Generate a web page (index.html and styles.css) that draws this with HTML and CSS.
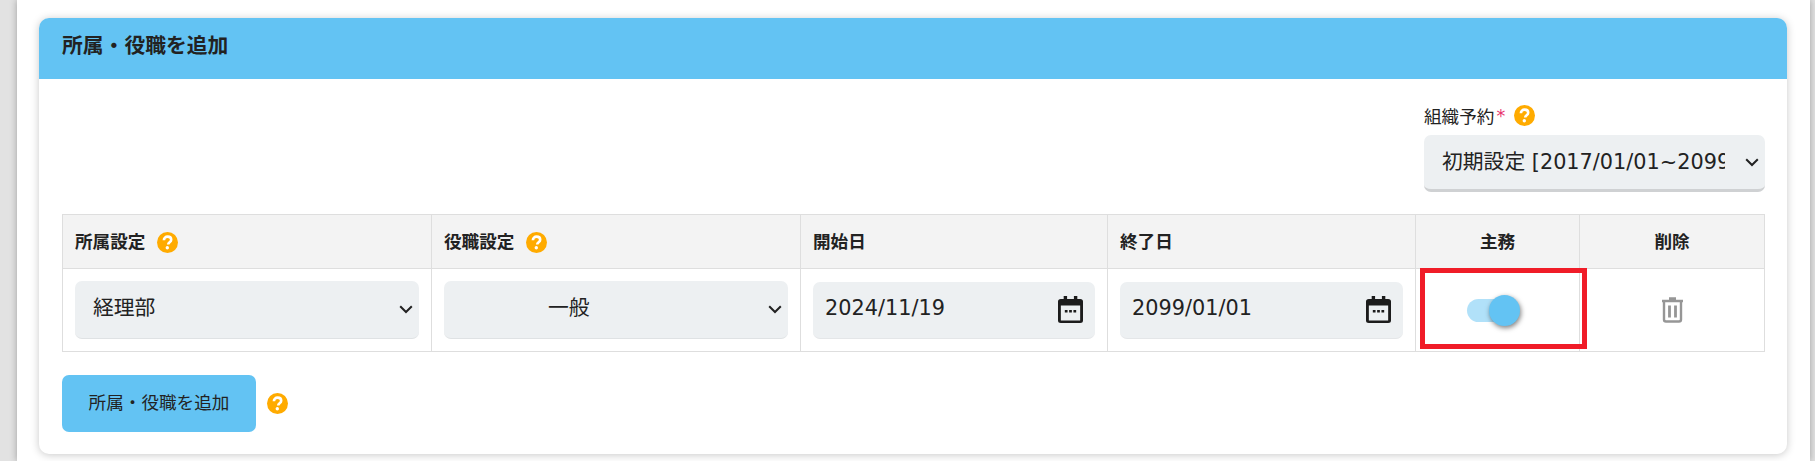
FILE: index.html
```html
<!DOCTYPE html>
<html lang="ja">

<head>
  <title>所属・役職を追加</title>
  <link rel="stylesheet" href="styles.css">
</head>

<body>
  <div class="page">
    <div class="prev-card"></div>

    <section class="card">
      <h2 class="card-head">所属・役職を追加</h2>

      <div class="card-body">
        <div class="org-row">
          <div class="org-field">
            <label class="org-label">組織予約<span class="req">*</span>
              <svg class="help" viewBox="0 0 21 21"><circle cx="10.5" cy="10.5" r="10.5" fill="#ffab00"/><path d="M6.9 8.2c0-2.2 1.6-3.6 3.7-3.6s3.6 1.3 3.6 3.1c0 2.6-3 2.5-3 4.8" fill="none" stroke="#fff" stroke-width="2.6"/><circle cx="10.3" cy="15.8" r="1.7" fill="#fff"/></svg>
            </label>
            <select class="select select-org">
              <option>初期設定 [2017/01/01~2099/01/01]</option>
            </select>
          </div>
        </div>

        <table class="roles">
          <colgroup>
            <col class="c-dept">
            <col class="c-post">
            <col class="c-date">
            <col class="c-date2">
            <col class="c-main">
            <col class="c-del">
          </colgroup>
          <thead>
            <tr>
              <th>所属設定
                <svg class="help help-th" viewBox="0 0 21 21"><circle cx="10.5" cy="10.5" r="10.5" fill="#ffab00"/><path d="M6.9 8.2c0-2.2 1.6-3.6 3.7-3.6s3.6 1.3 3.6 3.1c0 2.6-3 2.5-3 4.8" fill="none" stroke="#fff" stroke-width="2.6"/><circle cx="10.3" cy="15.8" r="1.7" fill="#fff"/></svg>
              </th>
              <th>役職設定
                <svg class="help help-th" viewBox="0 0 21 21"><circle cx="10.5" cy="10.5" r="10.5" fill="#ffab00"/><path d="M6.9 8.2c0-2.2 1.6-3.6 3.7-3.6s3.6 1.3 3.6 3.1c0 2.6-3 2.5-3 4.8" fill="none" stroke="#fff" stroke-width="2.6"/><circle cx="10.3" cy="15.8" r="1.7" fill="#fff"/></svg>
              </th>
              <th>開始日</th>
              <th>終了日</th>
              <th class="center">主務</th>
              <th class="center">削除</th>
            </tr>
          </thead>
          <tbody>
            <tr>
              <td>
                <select class="select">
                  <option>経理部</option>
                </select>
              </td>
              <td>
                <select class="select select-mid">
                  <option>一般</option>
                </select>
              </td>
              <td>
                <div class="date">
                  <span class="date-text">2024/11/19</span>
                  <svg class="cal" viewBox="1 0 22 27" preserveAspectRatio="none"><path d="M6 0h3v3h6V0h3v3h2.500A2.500 2.500 0 0 1 23 5.500v19a2.500 2.500 0 0 1-2.500 2.500h-17A2.500 2.500 0 0 1 1 24.500v-19A2.500 2.500 0 0 1 3.500 3H6zM3.500 9.500v15h17v-15z" fill="#1c1c1c" fill-rule="evenodd"/><path d="M7 14h2.400v2.400H7zM10.800 14h2.400v2.400h-2.400zM14.600 14H17v2.400h-2.400z" fill="#1c1c1c"/></svg>
                </div>
              </td>
              <td>
                <div class="date">
                  <span class="date-text">2099/01/01</span>
                  <svg class="cal" viewBox="1 0 22 27" preserveAspectRatio="none"><path d="M6 0h3v3h6V0h3v3h2.500A2.500 2.500 0 0 1 23 5.500v19a2.500 2.500 0 0 1-2.500 2.500h-17A2.500 2.500 0 0 1 1 24.500v-19A2.500 2.500 0 0 1 3.500 3H6zM3.500 9.500v15h17v-15z" fill="#1c1c1c" fill-rule="evenodd"/><path d="M7 14h2.400v2.400H7zM10.800 14h2.400v2.400h-2.400zM14.600 14H17v2.400h-2.400z" fill="#1c1c1c"/></svg>
                </div>
              </td>
              <td class="cell-toggle">
                <div class="toggle"><span class="knob"></span></div>
                <div class="marker"></div>
              </td>
              <td class="center">
                <svg class="trash" viewBox="0 0 23 26"><path d="M8 1.500h7M1 4h21" fill="none" stroke="#969696" stroke-width="2.400"/><path d="M3 4.500v18a2 2 0 0 0 2 2h13a2 2 0 0 0 2-2v-18" fill="none" stroke="#969696" stroke-width="2.400"/><path d="M8.500 8.500v12M14.500 8.500v12" fill="none" stroke="#969696" stroke-width="2.800"/></svg>
              </td>
            </tr>
          </tbody>
        </table>

        <div class="add-row">
          <button class="add-btn">所属・役職を追加</button>
          <svg class="help" viewBox="0 0 21 21"><circle cx="10.5" cy="10.5" r="10.5" fill="#ffab00"/><path d="M6.9 8.2c0-2.2 1.6-3.600 3.700-3.600s3.600 1.300 3.600 3.100c0 2.600-3 2.500-3 4.800" fill="none" stroke="#fff" stroke-width="2.600"/><circle cx="10.300" cy="15.800" r="1.700" fill="#fff"/></svg>
        </div>
      </div>
    </section>
  </div>
</body>

</html>
```

FILE: styles.css
```css
html,
body {
  margin: 0;
  height: 461px;
  overflow: hidden;
  background: #e2e2e2;
}

body {
  font-family: "DejaVu Sans", "Noto Sans CJK JP", sans-serif;
  color: #222;
}

.page {
  display: flex;
  flex-direction: column;
  box-sizing: border-box;
  height: 461px;
  margin: 0 5px 0 17px;
  padding: 0 23px 0 22px;
  background: #fff;
  box-shadow: 0 0 7px rgba(0, 0, 0, 0.3);
}

.prev-card {
  flex: none;
  height: 0;
  margin-bottom: 18px;
  box-shadow: 0 0 5px rgba(0, 0, 0, 0.25);
}

.card {
  flex: none;
  height: 436px;
  background: #fff;
  border-radius: 10px;
  box-shadow: 0 1px 8px rgba(0, 0, 0, 0.22);
}

.card-head {
  margin: 0;
  height: 61px;
  padding: 0 23px;
  line-height: 57px;
  font-size: 20.8px;
  font-weight: 700;
  background: #63c3f3;
  border-radius: 10px 10px 0 0;
}

.card-body {
  padding: 19px 22px 0 23px;
}

.org-row {
  display: flex;
  justify-content: flex-end;
  height: 116px;
}

.org-field {
  width: 341px;
}

.org-label {
  display: flex;
  align-items: center;
  height: 35px;
  margin-bottom: 2px;
  font-size: 17.6px;
}

.req {
  color: #e8336d;
  margin: 0 9px 0 2px;
}

.help {
  width: 21px;
  height: 21px;
  flex: none;
}

.help-th {
  vertical-align: -5px;
  margin-left: 5px;
}

.select {
  appearance: none;
  display: block;
  box-sizing: border-box;
  width: 100%;
  height: 58px;
  padding: 0 38px 4px 18px;
  border: none;
  border-bottom: 1px solid #dfe2e4;
  border-radius: 7px;
  background: #edf0f2 url("data:image/svg+xml,%3Csvg xmlns='http://www.w3.org/2000/svg' viewBox='0 0 14 9'%3E%3Cpath d='M1.200 1.200 7 7l5.800-5.800' fill='none' stroke='%23222' stroke-width='2'/%3E%3C/svg%3E") no-repeat right 6px center / 14px 9px;
  color: #222;
  font-family: inherit;
  font-size: 20.8px;
  outline: none;
}

.select-org {
  height: 57px;
  padding: 0 40px 0 18px;
  border-bottom: 3px solid #cfd1d3;
}

.select-mid {
  padding-left: 104px;
}

.roles {
  width: 1703px;
  table-layout: fixed;
  border-collapse: collapse;
}

.c-dept {
  width: 369px;
}

.c-post {
  width: 369px;
}

.c-date {
  width: 307px;
}

.c-date2 {
  width: 308px;
}

.c-main {
  width: 164px;
}

.roles th,
.roles td {
  border: 1px solid #dedede;
}

.roles th {
  height: 50px;
  padding: 0 12px 3px;
  background: #f3f3f3;
  font-size: 17.6px;
  font-weight: 700;
  text-align: left;
}

.roles th.center {
  text-align: center;
}

.roles td {
  height: 82px;
  padding: 0 12px;
}

.roles td.center {
  text-align: center;
}

.date {
  display: flex;
  align-items: center;
  justify-content: space-between;
  box-sizing: border-box;
  height: 57px;
  padding: 0 12px;
  background: #edf0f2;
  border-radius: 7px;
  border-bottom: 1px solid #e4e6e8;
}

.date-text {
  font-size: 20.8px;
  padding-bottom: 3px;
}

.cal {
  width: 25px;
  height: 27px;
}

.cell-toggle {
  position: relative;
}

.toggle {
  position: relative;
  width: 43px;
  height: 23px;
  margin: 0 0 0 39px;
  background: #b1e1f9;
  border-radius: 12px;
}

.knob {
  position: absolute;
  top: -4px;
  right: -10px;
  width: 31px;
  height: 31px;
  background: #63c3f3;
  border-radius: 50%;
  box-shadow: 1px 2px 5px rgba(0, 0, 0, 0.5);
}

/* red annotation box drawn over the cell */
.marker {
  position: absolute;
  left: 4px;
  top: -1px;
  width: 157px;
  height: 71px;
  border: 5px solid #f01c28;
}

.trash {
  width: 23px;
  height: 26px;
  vertical-align: middle;
}

.add-row {
  display: flex;
  align-items: center;
  gap: 11px;
  margin-top: 23px;
}

.add-btn {
  width: 194px;
  height: 57px;
  padding: 0 0 4px;
  border: none;
  border-radius: 7px;
  background: #63c3f3;
  color: #222;
  font-family: inherit;
  font-size: 17.6px;
}
```
